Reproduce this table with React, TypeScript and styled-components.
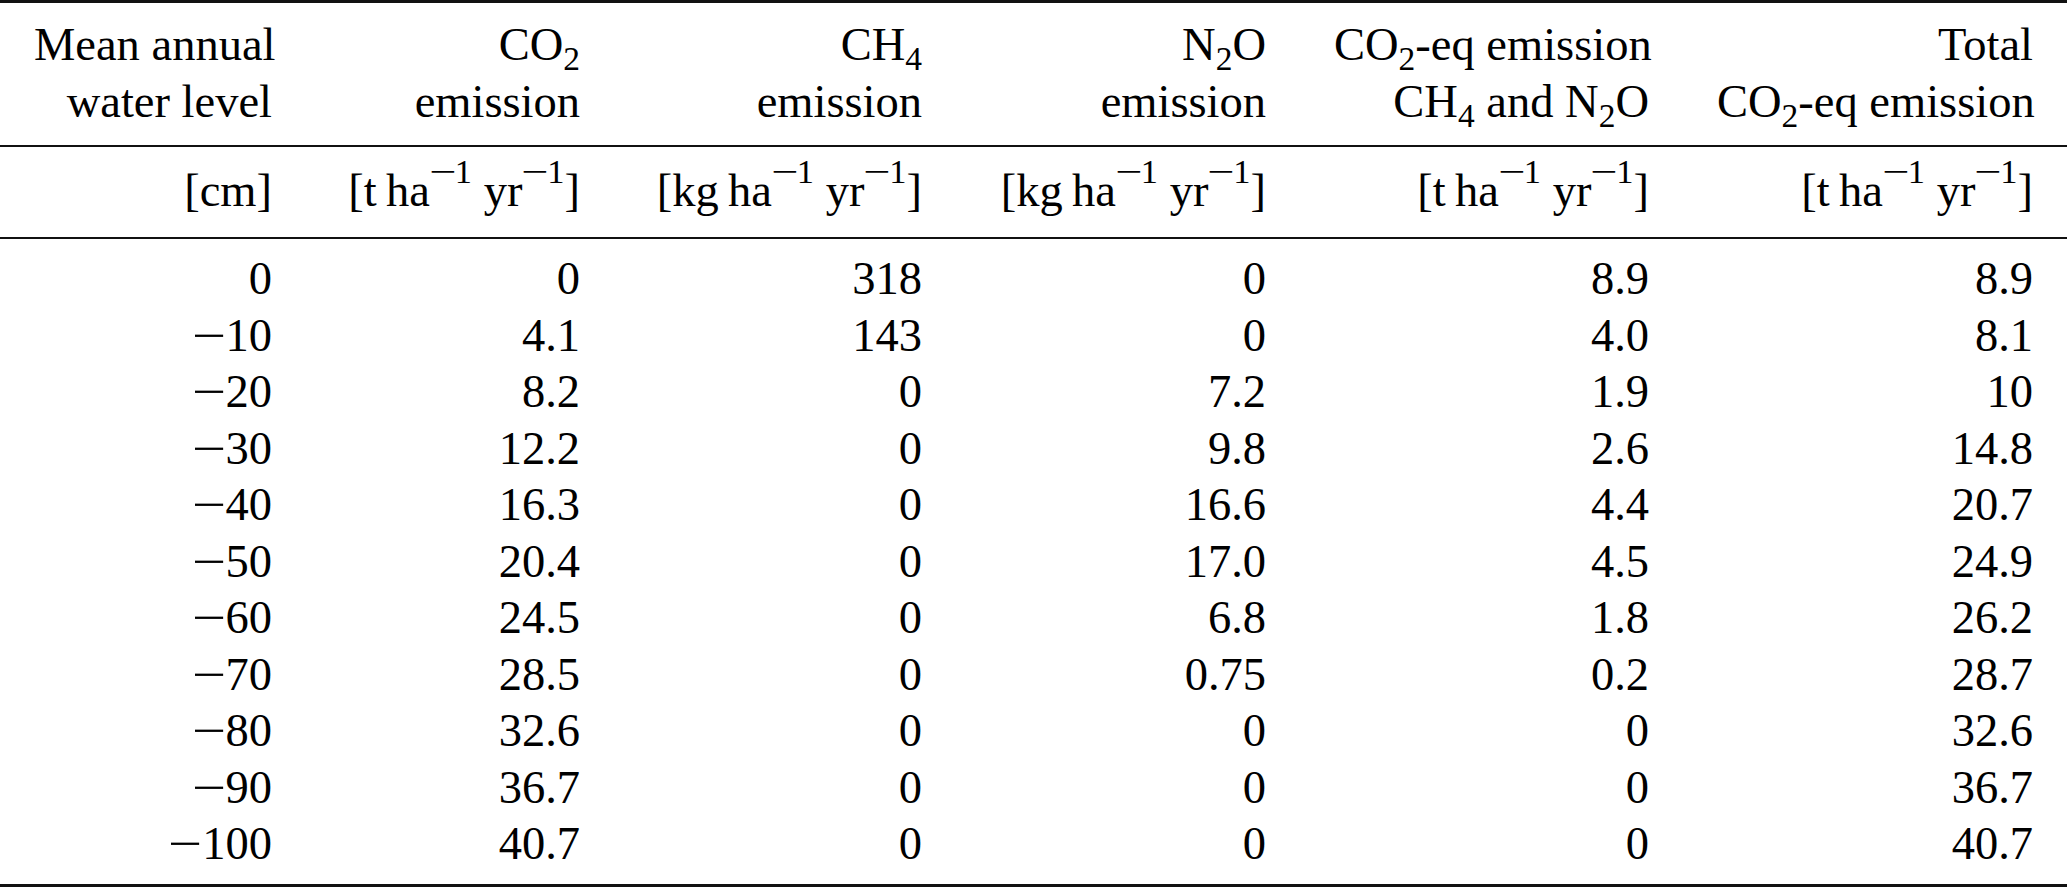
import * as React from 'react';
import styled, { createGlobalStyle } from 'styled-components';

const GlobalStyle = createGlobalStyle`
  html, body {
    margin: 0;
    padding: 0;
    background: #fff;
  }

  body {
    font-family: 'Liberation Serif', 'Times New Roman', serif;
    color: #000;
  }
`;

const COLUMN_WIDTHS = [306, 308, 342, 344, 383, 384];

const ROWS: string[][] = [
  ['0', '0', '318', '0', '8.9', '8.9'],
  ['-10', '4.1', '143', '0', '4.0', '8.1'],
  ['-20', '8.2', '0', '7.2', '1.9', '10'],
  ['-30', '12.2', '0', '9.8', '2.6', '14.8'],
  ['-40', '16.3', '0', '16.6', '4.4', '20.7'],
  ['-50', '20.4', '0', '17.0', '4.5', '24.9'],
  ['-60', '24.5', '0', '6.8', '1.8', '26.2'],
  ['-70', '28.5', '0', '0.75', '0.2', '28.7'],
  ['-80', '32.6', '0', '0', '0', '32.6'],
  ['-90', '36.7', '0', '0', '0', '36.7'],
  ['-100', '40.7', '0', '0', '0', '40.7'],
];

// renders a signed value with a proper math minus
function Value({ value }: { value: string }) {
  if (!value.startsWith('-')) return <>{value}</>;
  return (
    <>
      <Minus>−</Minus>
      {value.slice(1)}
    </>
  );
}

function PerHectare({ mass }: { mass: string }) {
  return (
    <>
      [{mass}
      {'\u2009'}ha
      <Sup>
        <SupMinus>−</SupMinus>1
      </Sup>{' '}
      yr
      <Sup>
        <SupMinus>−</SupMinus>1
      </Sup>
      ]
    </>
  );
}

function App() {
  return (
    <>
      <GlobalStyle />
      <Table>
        <colgroup>
          {COLUMN_WIDTHS.map((w, i) => (
            <col key={i} style={{ width: w }} />
          ))}
        </colgroup>
        <thead>
          <tr>
            <HeadCell>
              Mean annual
              <br />
              water level
            </HeadCell>
            <HeadCell>
              CO<Sub>2</Sub>
              <br />
              emission
            </HeadCell>
            <HeadCell>
              CH<Sub>4</Sub>
              <br />
              emission
            </HeadCell>
            <HeadCell>
              N<Sub>2</Sub>O
              <br />
              emission
            </HeadCell>
            <HeadCell>
              CO<Sub>2</Sub>-eq emission
              <br />
              CH<Sub>4</Sub> and N<Sub>2</Sub>O
            </HeadCell>
            <HeadCell>
              Total
              <br />
              CO<Sub>2</Sub>-eq emission
            </HeadCell>
          </tr>
          <tr>
            <UnitCell>[cm]</UnitCell>
            <UnitCell>
              <PerHectare mass="t" />
            </UnitCell>
            <UnitCell>
              <PerHectare mass="kg" />
            </UnitCell>
            <UnitCell>
              <PerHectare mass="kg" />
            </UnitCell>
            <UnitCell>
              <PerHectare mass="t" />
            </UnitCell>
            <UnitCell>
              <PerHectare mass="t" />
            </UnitCell>
          </tr>
        </thead>
        <tbody>
          {ROWS.map((row, r) => (
            <tr key={r}>
              {row.map((value, c) => (
                <DataCell key={c} $first={r === 0} $last={r === ROWS.length - 1}>
                  <Value value={value} />
                </DataCell>
              ))}
            </tr>
          ))}
        </tbody>
      </Table>
    </>
  );
}

const Table = styled.table`
  width: 2067px;
  table-layout: fixed;
  border-collapse: separate;
  border-spacing: 0;
  font-size: 46.5px;
  color: #000;
`;

const HeadCell = styled.th`
  padding: 13px 34px 15px;
  line-height: 57px;
  font-weight: normal;
  text-align: right;
  vertical-align: top;
  white-space: nowrap;
  border-top: 3px solid #111;
  border-bottom: 2px solid #111;
`;

const UnitCell = styled.th`
  padding: 18px 34px 20px;
  line-height: 52px;
  font-weight: normal;
  text-align: right;
  white-space: nowrap;
  border-bottom: 2px solid #111;
`;

const DataCell = styled.td<{ $first: boolean; $last: boolean }>`
  padding: ${(p) => (p.$first ? '12px' : '0')} 34px ${(p) => (p.$last ? '11.5px' : '0')};
  line-height: 56.5px;
  text-align: right;
  white-space: nowrap;
  border-bottom: ${(p) => (p.$last ? '3px solid #111' : 'none')};
`;

const Sub = styled.span`
  position: relative;
  top: 0.3em;
  font-size: 0.72em;
  line-height: 0;
`;

const Sup = styled.span`
  position: relative;
  top: -0.68em;
  font-size: 0.74em;
  line-height: 0;
`;

const Minus = styled.span`
  display: inline-block;
  margin: 0 0.08em;
  transform: scaleX(1.3);
`;

const SupMinus = styled(Minus)`
  margin: 0 0.08em;
  transform: scaleX(1.4);
`;

export default App;
